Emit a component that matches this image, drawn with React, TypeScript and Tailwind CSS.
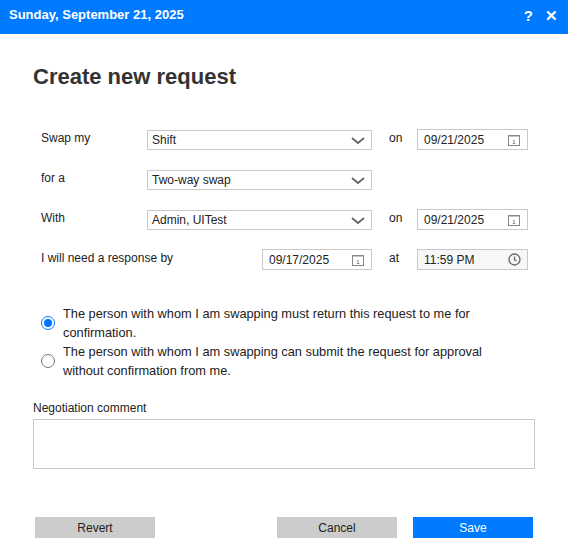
import React from "react";

const Chev = () => (
  <svg width="14" height="8" viewBox="0 0 14 8" className="absolute right-[6px] top-[6px]"><path d="M1 1l6 5 6-5" fill="none" stroke="#666" strokeWidth="1.8"/></svg>
);
const Cal = () => (
  <svg width="12" height="12" viewBox="0 0 12 12" className="absolute right-[7px] top-[4px]"><rect x="0.5" y="1.5" width="11" height="10" fill="#fff" stroke="#888"/><line x1="0.5" y1="2.5" x2="11.5" y2="2.5" stroke="#888" strokeDasharray="1 1"/><text x="6" y="10" fontSize="6" textAnchor="middle" fill="#555" fontFamily="Liberation Sans">1</text></svg>
);
const Clock = () => (
  <svg width="13" height="13" viewBox="0 0 13 13" className="absolute right-[6px] top-[3px]"><circle cx="6.5" cy="6.5" r="5.5" fill="none" stroke="#666" strokeWidth="1.3"/><path d="M6.5 3.5v3.2l2 1.3" fill="none" stroke="#666" strokeWidth="1.3"/></svg>
);
const Sel = ({ v }: { v: string }) => (
  <div className="relative w-[225px] h-[20px] border border-[#c8c8c8] bg-white pl-[4px] leading-[18px]">{v}<Chev /></div>
);
const DateBox = ({ v, w = "w-[111px]", clock = false }: { v: string; w?: string; clock?: boolean }) => (
  <div className={`relative ${w} h-[21px] border border-[#c8c8c8] ${clock ? "bg-[#f7f7f7]" : "bg-white"} pl-[6px] leading-[21px]`}>{v}{clock ? <Clock /> : <Cal />}</div>
);

export default function App() {
  return (
    <div className="w-[568px] h-[538px] bg-white text-[12px] text-[#222]" style={{ fontFamily: "'Liberation Sans', Arial, sans-serif" }}>
      <div className="h-[34px] bg-[#007bff] flex items-start justify-between pl-[9px] pr-[10px] pt-[5px] text-white">
        <span className="font-bold text-[13px]">Sunday, September 21, 2025</span>
        <div className="flex gap-[12px] font-bold text-[15px] leading-[20px] pt-[1px]"><span>?</span><span>✕</span></div>
      </div>
      <div className="pl-[33px] pt-[28px] text-[22px] font-bold text-[#333] leading-[30px]">Create new request</div>
      <div className="pl-[41px] mt-[37px] flex flex-col gap-[19px]">
        <div className="flex items-center h-[21px]">
          <span className="w-[106px] -mt-[3px]">Swap my</span><Sel v="Shift" />
          <span className="w-[45px] pl-[17px] -mt-[3px]">on</span><DateBox v="09/21/2025" />
        </div>
        <div className="flex items-center h-[21px]">
          <span className="w-[106px] -mt-[3px]">for a</span><Sel v="Two-way swap" />
        </div>
        <div className="flex items-center h-[21px]">
          <span className="w-[106px] -mt-[3px]">With</span><Sel v="Admin, UITest" />
          <span className="w-[45px] pl-[17px] -mt-[3px]">on</span><DateBox v="09/21/2025" />
        </div>
        <div className="flex items-center h-[21px]">
          <span className="w-[221px] -mt-[3px]">I will need a response by</span><DateBox v="09/17/2025" w="w-[110px]" />
          <span className="w-[45px] pl-[17px] -mt-[3px]">at</span><DateBox v="11:59 PM" clock />
        </div>
      </div>
      <div className="pl-[41px] pr-[50px] mt-[34px] flex flex-col text-[12.8px]">
        <label className="flex items-center gap-[8px]">
          <span className="w-[14px] h-[14px] rounded-full border border-[#0075ff] flex items-center justify-center shrink-0"><span className="w-[8px] h-[8px] rounded-full bg-[#0075ff]" /></span>
          <span className="leading-[19px]">The person with whom I am swapping must return this request to me for confirmation.</span>
        </label>
        <label className="flex items-center gap-[8px]">
          <span className="w-[14px] h-[14px] rounded-full border border-[#777] shrink-0" />
          <span className="leading-[19px]">The person with whom I am swapping can submit the request for approval without confirmation from me.</span>
        </label>
      </div>
      <div className="pl-[33px] mt-[19px]">Negotiation comment</div>
      <div className="ml-[33px] mt-[2px] w-[502px] h-[50px] border border-[#c8c8c8]" />
      <div className="flex mt-[48px] pl-[35px] text-[12px]">
        <div className="w-[120px] h-[22px] bg-[#cccccc] flex items-center justify-center">Revert</div>
        <div className="w-[120px] h-[22px] bg-[#cccccc] flex items-center justify-center ml-[122px]">Cancel</div>
        <div className="w-[120px] h-[22px] bg-[#007bff] text-white flex items-center justify-center ml-[16px]">Save</div>
      </div>
    </div>
  );
}
